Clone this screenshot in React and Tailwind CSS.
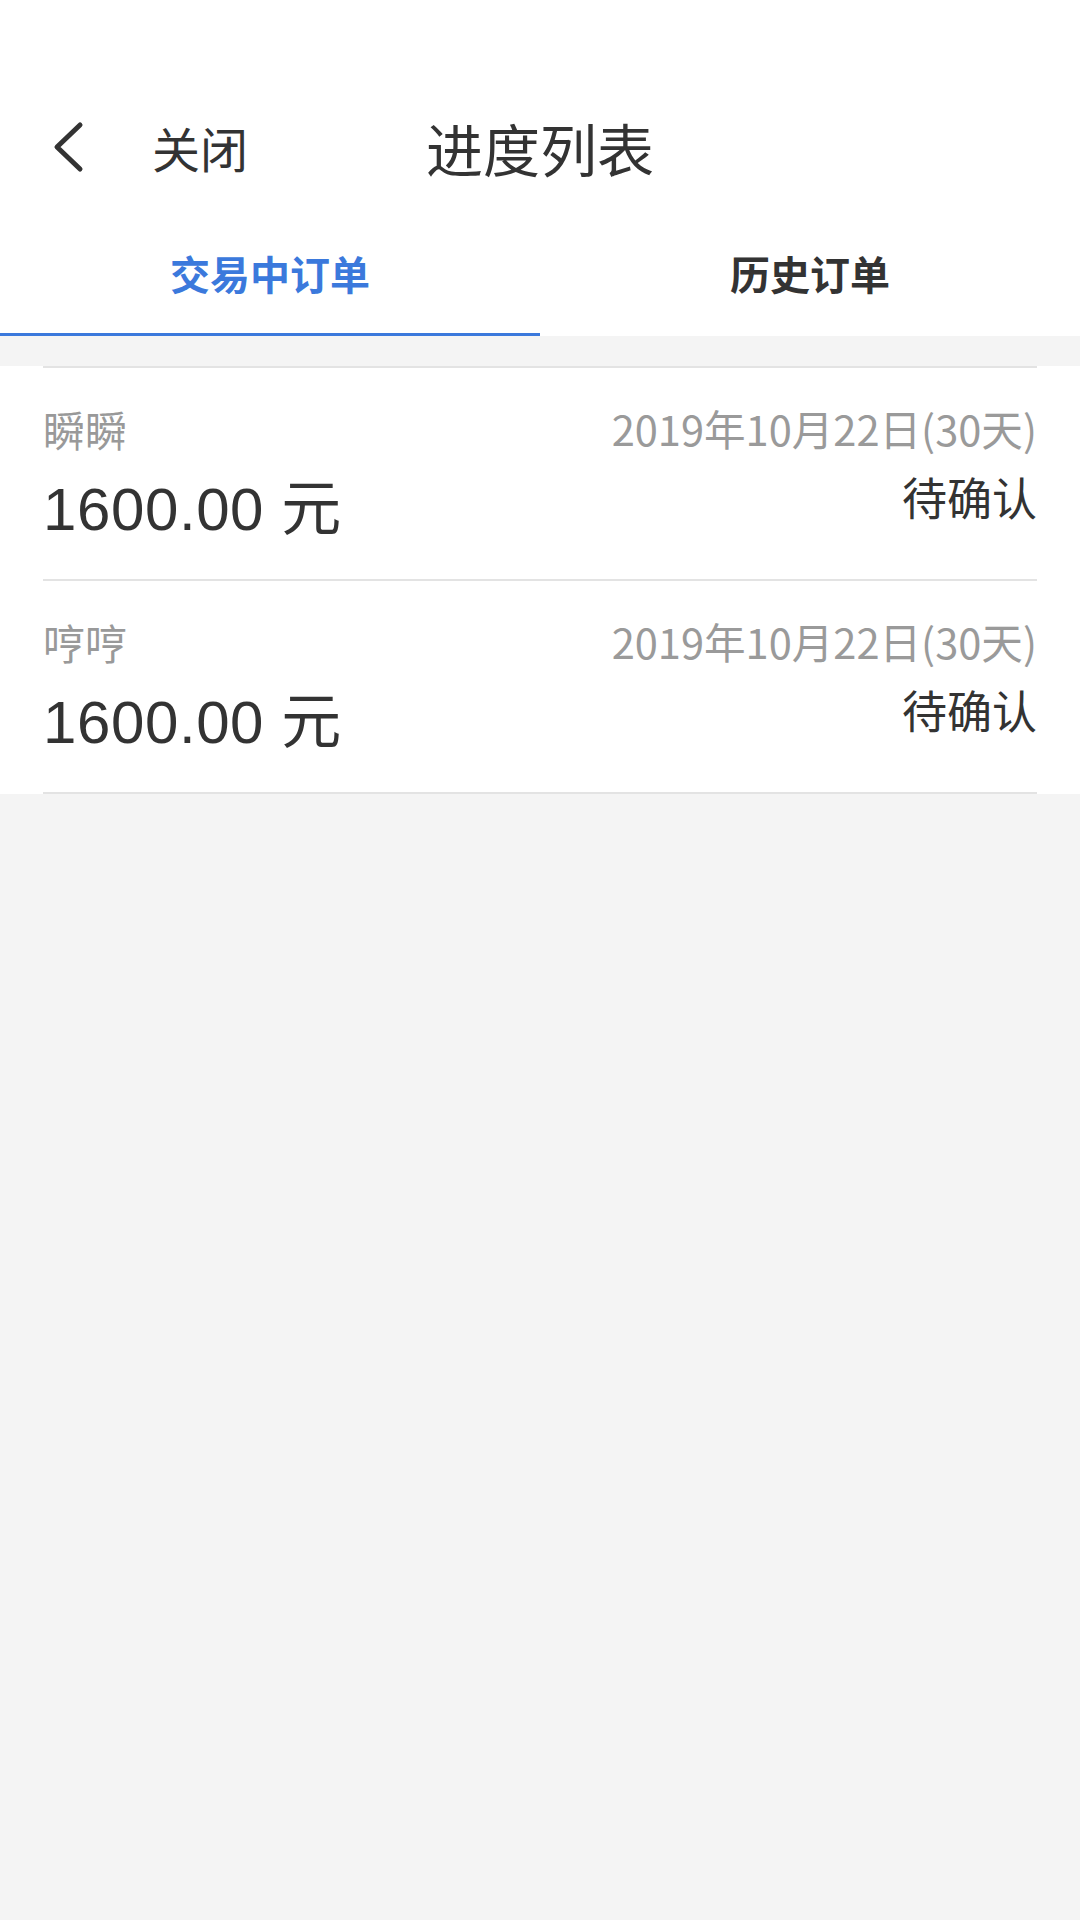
import React from "react";

const FONT = { fontFamily: '"Noto Sans CJK SC", "Noto Sans", sans-serif' };
const NUM = { fontFamily: '"Liberation Sans", "Noto Sans CJK SC", sans-serif' };

function Item({ name }) {
  return (
    <div className="flex justify-between border-t-[2px] border-[#e3e3e3] h-[213px]">
      <div className="flex flex-col pt-[40px]">
        <div className="text-[42px] leading-[42px] text-[#999999]">{name}</div>
        <div style={NUM} className="mt-[31px] text-[60px] leading-[58px] tracking-[0.6px] text-[#333333]">1600.00 元</div>
      </div>
      <div className="flex flex-col items-end pt-[40px]">
        <div className="text-[41.6px] leading-[40px] text-[#9a9a9a]">2019年10月22日(30天)</div>
        <div className="mt-[26px] text-[45px] leading-[45px] text-[#333333]">待确认</div>
      </div>
    </div>
  );
}

export default function App() {
  return (
    <div style={FONT} className="w-[1080px] min-h-[1920px] bg-[#f4f4f4]">
      <div className="bg-white">
        <div className="pt-[88px]">
          <div className="grid grid-cols-[1fr_auto_1fr] items-center h-[118px]">
            <div className="flex items-center pl-[53px]">
              <svg width="32" height="52" viewBox="0 0 32 52" fill="none">
                <path d="M27 4 L4 26 L27 48" stroke="#333333" strokeWidth="5" strokeLinecap="round" strokeLinejoin="round" />
              </svg>
              <span className="ml-[67px] text-[48px] leading-[48px] text-[#333333]">关闭</span>
            </div>
            <div className="text-[57px] leading-[56px] text-[#333333]">进度列表</div>
            <div />
          </div>
        </div>
        <div className="flex h-[130px]">
          <div className="flex-1 flex items-center justify-center pt-[6px] border-b-[3px] border-[#3b79dc]">
            <span className="text-[40px] leading-[40px] font-bold text-[#3b79dc]">交易中订单</span>
          </div>
          <div className="flex-1 flex items-center justify-center pt-[6px] border-b-[3px] border-transparent">
            <span className="text-[40px] leading-[40px] font-bold text-[#333333]">历史订单</span>
          </div>
        </div>
      </div>
      <div className="h-[30px]" />
      <div className="bg-white px-[43px]">
        <Item name="瞬瞬" />
        <div className="border-b-[2px] border-[#e3e3e3]">
          <Item name="哼哼" />
        </div>
      </div>
    </div>
  );
}
